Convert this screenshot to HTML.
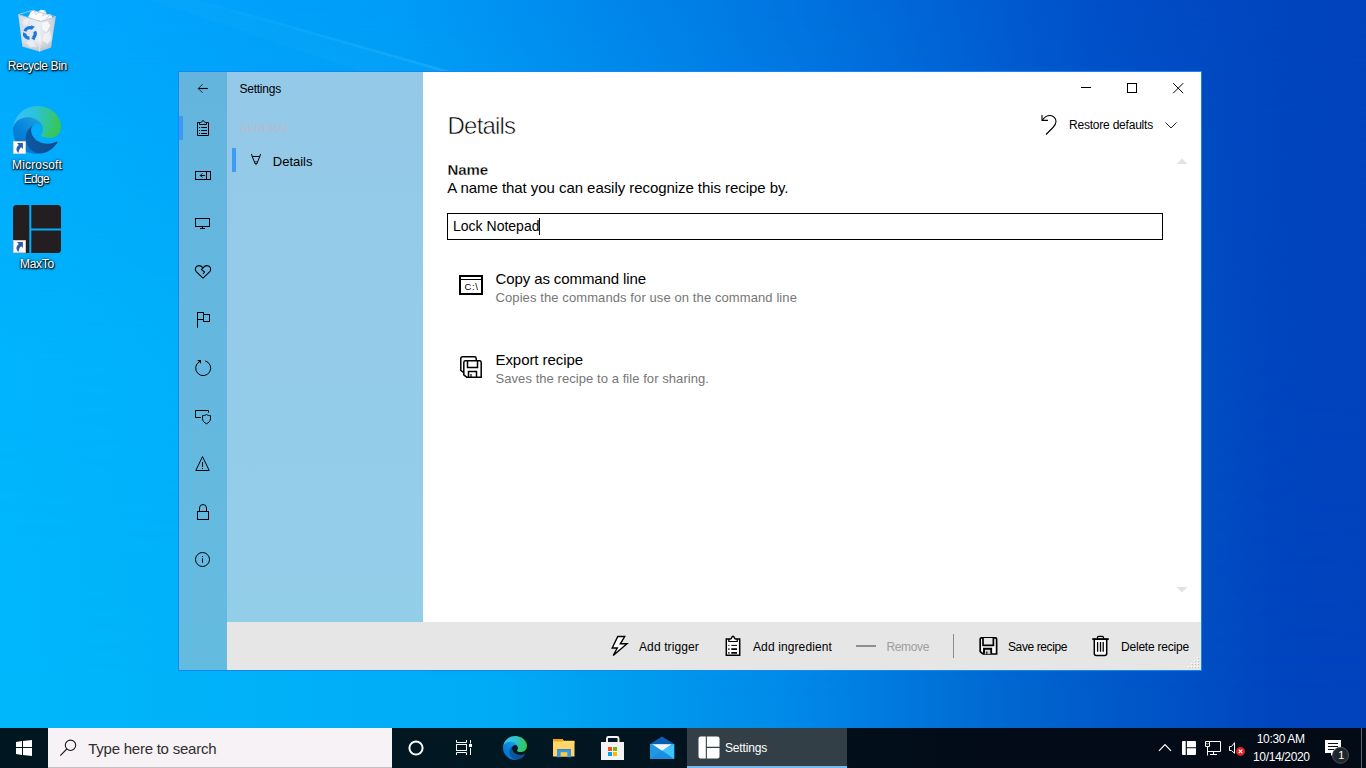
<!DOCTYPE html>
<html>
<head>
<meta charset="utf-8">
<title>Settings</title>
<style>
*{box-sizing:border-box;margin:0;padding:0}
html,body{width:1366px;height:768px;overflow:hidden}
body{font-family:"Liberation Sans",sans-serif;position:relative;color:#000;
background:linear-gradient(90deg,rgb(0,168,254) 0px,rgb(0,166,253) 100px,rgb(0,156,247) 400px,rgb(0,126,230) 700px,rgb(0,104,216) 900px,rgb(0,79,200) 1100px,rgb(0,68,188) 1310px,rgb(0,67,187) 1366px);}
.abs{position:absolute}
.t{position:absolute;white-space:nowrap;line-height:1}
svg{position:absolute;overflow:visible}
#bgl{position:absolute;left:0;top:0;width:1366px;height:728px;
background:linear-gradient(90deg,rgb(0,183,252) 0px,rgb(0,181,250) 100px,rgb(0,171,245) 500px,rgb(0,136,232) 800px,rgb(0,101,207) 1020px,rgb(0,68,190) 1280px,rgb(0,66,188) 1366px);
-webkit-mask-image:linear-gradient(180deg,transparent 0,rgba(0,0,0,.8) 50%,#000 96%);mask-image:linear-gradient(180deg,transparent 0,rgba(0,0,0,.8) 50%,#000 96%)}
#win{position:absolute;left:178px;top:71px;width:1024px;height:600px;background:#fff;border:1px solid #1587f4}
#rail{position:absolute;left:0;top:0;width:48px;height:598px;background:linear-gradient(180deg,#64b5de,#64bbe0)}
#side{position:absolute;left:48px;top:0;width:196px;height:550px;background:linear-gradient(180deg,#94c9e8,#93cee9)}
#bar{position:absolute;left:48px;top:550px;width:974px;height:48px;background:#e6e6e6}
#tb{position:absolute;left:0;top:728px;width:1366px;height:40px;background:linear-gradient(90deg,#001722 0,#011822 520px,#020b17 1000px,#030b17 1366px)}
#search{position:absolute;left:48px;top:0;width:344px;height:40px;background:#f6f2f6;border-bottom:1px solid #c2bfc2}
#task{position:absolute;left:687px;top:0;width:160px;height:40px;background:#323f47}
#task i{position:absolute;left:0;bottom:0;width:160px;height:2px;background:#76b9ed}
</style>
</head>
<body>
<div id="bgl"></div>
<svg id="ray" style="left:0;top:0" width="1366" height="80" viewBox="0 0 1366 80"><defs><linearGradient id="rg" x1="0" y1="0" x2="1" y2="0"><stop offset="0" stop-color="#3cc0ff" stop-opacity=".05"/><stop offset="1" stop-color="#3cc0ff" stop-opacity=".38"/></linearGradient></defs><path d="M196 0L470 78" stroke="url(#rg)" stroke-width="2.500" fill="none"/><path d="M196 0L470 78L380 78L150 0z" fill="#22b4ff" opacity=".12"/></svg>

<!-- DESKTOP ICONS -->
<svg style="left:14px;top:8px" width="46" height="46" viewBox="0 0 46 46">
<defs><linearGradient id="rb1" x1="0" y1="0" x2="1" y2="0"><stop offset="0" stop-color="#cfd8e4"/><stop offset=".5" stop-color="#e4e8ee"/><stop offset="1" stop-color="#eef0f3"/></linearGradient>
<linearGradient id="rb2" x1="0" y1="0" x2="1" y2="0"><stop offset="0" stop-color="#e9ebee"/><stop offset="1" stop-color="#c6ccd6"/></linearGradient>
<linearGradient id="rb3" x1="0" y1="0" x2="0" y2="1"><stop offset="0" stop-color="#fff" stop-opacity="0"/><stop offset=".7" stop-color="#9aa0aa" stop-opacity="0"/><stop offset="1" stop-color="#8f96a2" stop-opacity=".5"/></linearGradient></defs>
<path d="M14 9L17 3.500L20 2.200L23.500 4L27 1.800L31 2.500L32.500 6L37 6.500L38.500 10L30 13.500L20 12z" fill="#fbfbfc"/>
<path d="M20 2.200L22 7L27 1.800M31 2.500L28.500 8L32.500 6M37 6.500L32 10.500" fill="none" stroke="#cfd4db" stroke-width=".9"/>
<path d="M4.200 6.600L26.600 13.400L25.600 43.600L8.400 38.400z" fill="url(#rb1)"/>
<path d="M26.600 13.400L41.700 8.700L37 39.400L25.600 43.600z" fill="url(#rb2)"/>
<path d="M4.200 6.600L26.600 13.400L25.600 43.600L8.400 38.400zM26.600 13.400L41.700 8.700L37 39.400L25.600 43.600z" fill="url(#rb3)"/>
<path d="M28 15L33.500 13.300L36.500 18L33 24.500L28.500 22z" fill="#fafbfc" opacity=".85"/>
<path d="M30 26L36 23L37.500 31L33.500 36.500L28.500 33z" fill="#f6f7f9" opacity=".7"/>
<path d="M33 24.500L36.500 18M28.500 33L33.500 36.500" stroke="#b9bfc9" stroke-width=".7" opacity=".7"/>
<path d="M9.500 12L15 10.500L13 17L8.500 16.500z" fill="#f5f7fa" opacity=".6"/>
<path d="M12 34L18 33L22.500 38.500L16 39.500z" fill="#f7f8fa" opacity=".6"/>
<path d="M4.200 6.600L18.300 2.400L41.700 8.700L26.600 13.400z" fill="none" stroke="#b6c7da" stroke-width=".9"/>
<path d="M26.600 13.400L25.600 43.600" stroke="#fff" stroke-width=".8" opacity=".8"/>
<g fill="none" stroke="#1b78dc" stroke-width="3.200"><path d="M10.900 23.200a5.200 5.200 0 0 1 7.300-3"/><path d="M20.700 23.300a5.200 5.200 0 0 1-1.700 6.400"/><path d="M15.500 30.200a5.200 5.200 0 0 1-4.900-3.700"/></g>
<g fill="#1b78dc"><path d="M17 17.200l3.800 1.500l-3 3z"/><path d="M21.500 28.500l-1 4l-3.500-2.600z"/><path d="M9 28.500l0-4.200l3.800 1.800z"/></g>
</svg>
<span class="t" style="left:7.80px;top:59.64px;font-size:12px;letter-spacing:-0.406px;color:#fff;text-shadow:0 1px 2px rgba(0,0,0,.95),0 0 3px rgba(0,0,0,.7),1px 1px 1px rgba(0,0,0,.8);">Recycle Bin</span>
<svg style="left:13px;top:106px" width="48" height="48" viewBox="0 0 256 256"><defs><linearGradient id="e1a" x1="63" y1="178" x2="242" y2="178" gradientUnits="userSpaceOnUse"><stop offset="0" stop-color="#0c59a4"/><stop offset="1" stop-color="#114a8b"/></linearGradient>
<linearGradient id="e1c" x1="157" y1="99" x2="46" y2="220" gradientUnits="userSpaceOnUse"><stop offset="0" stop-color="#1b9de2"/><stop offset=".16" stop-color="#1595df"/><stop offset=".67" stop-color="#0680d7"/><stop offset="1" stop-color="#0078d4"/></linearGradient>
<radialGradient id="e1e" cx="25" cy="47" r="340" gradientUnits="userSpaceOnUse"><stop offset="0" stop-color="#35c1f1"/><stop offset=".11" stop-color="#34c1ed"/><stop offset=".23" stop-color="#2fc2df"/><stop offset=".31" stop-color="#2bc3d2"/><stop offset=".67" stop-color="#36c752"/></radialGradient></defs>
<path d="M231 190.500c-3.400 1.800-6.900 3.400-10.500 4.700a101.500 101.500 0 0 1-35.800 6.400c-47.200 0-88.300-32.400-88.300-74.100a31.400 31.400 0 0 1 16.400-27.200c-42.700 1.800-53.700 46.300-53.700 72.300 0 73.700 67.900 81.200 82.600 81.200 7.900 0 19.800-2.300 27-4.600l1.300-.4a128.300 128.300 0 0 0 66.600-52.800 4 4 0 0 0-5.500-5.500z" fill="url(#e1a)"/>
<path d="M105.700 241.400a79.200 79.200 0 0 1-22.700-21.300 80.700 80.700 0 0 1 29.500-120c3.200-1.500 8.500-4.100 15.600-4a32.400 32.400 0 0 1 25.700 13 31.900 31.900 0 0 1 6.300 18.700c0-.2 24.500-79.600-80-79.600-43.900 0-80 41.600-80 78.200a130.200 130.200 0 0 0 12.100 56 128 128 0 0 0 156.400 67.100 75.500 75.500 0 0 1-62.800-8z" fill="url(#e1c)"/>
<path d="M152.300 148.900c-.9 1-3.400 2.500-3.400 5.600 0 2.600 1.700 5.200 4.800 7.300 14.300 10 41.400 8.600 41.500 8.600a59.600 59.600 0 0 0 30.300-8.300 61.400 61.400 0 0 0 30.400-52.900c.3-22.400-8-37.300-11.300-43.900C223.500 24.100 178.100 0 128 0A128 128 0 0 0 0 126.200c.5-36.500 36.800-66 80-66 3.500 0 23.500.3 42 10a72.600 72.600 0 0 1 30.900 29.300c6.100 10.600 7.200 24.100 7.200 29.500s-2.700 13.300-7.900 20z" fill="url(#e1e)"/></svg>
<svg style="left:13px;top:141px" width="13" height="13" viewBox="0 0 13 13"><rect x=".4" y=".4" width="12.200" height="12.200" fill="#fcfcfd" stroke="#e6cdbb" stroke-width=".8"/><path d="M4 2.100H9.900V8L8.100 6.200C6.600 7.300 5.900 9.200 5.600 11.800C3.300 10.200 2.200 6.600 5.800 3.900z" fill="#2a5cab"/></svg>
<span class="t" style="left:12.10px;top:158.94px;font-size:12px;letter-spacing:0.146px;color:#fff;text-shadow:0 1px 2px rgba(0,0,0,.95),0 0 3px rgba(0,0,0,.7),1px 1px 1px rgba(0,0,0,.8);">Microsoft</span>
<span class="t" style="left:23.70px;top:173.44px;font-size:12px;letter-spacing:-0.683px;color:#fff;text-shadow:0 1px 2px rgba(0,0,0,.95),0 0 3px rgba(0,0,0,.7),1px 1px 1px rgba(0,0,0,.8);">Edge</span>
<svg style="left:13px;top:205px" width="48" height="48" viewBox="0 0 48 48"><g fill="#231f20"><path d="M3.500 0H16.300V48H3.500A3.500 3.500 0 0 1 0 44.500V3.500A3.500 3.500 0 0 1 3.500 0z"/><path d="M18.300 0H44.500A3.500 3.500 0 0 1 48 3.500V23.600H18.300z"/><path d="M18.300 25.500H48V44.500A3.500 3.500 0 0 1 44.500 48H18.300z"/></g></svg>
<svg style="left:13px;top:240px" width="13" height="13" viewBox="0 0 13 13"><rect x=".4" y=".4" width="12.200" height="12.200" fill="#fcfcfd" stroke="#e6cdbb" stroke-width=".8"/><path d="M4 2.100H9.900V8L8.100 6.200C6.600 7.300 5.900 9.200 5.600 11.800C3.300 10.200 2.200 6.600 5.800 3.900z" fill="#2a5cab"/></svg>
<span class="t" style="left:20.00px;top:257.84px;font-size:12px;letter-spacing:-0.310px;color:#fff;text-shadow:0 1px 2px rgba(0,0,0,.95),0 0 3px rgba(0,0,0,.7),1px 1px 1px rgba(0,0,0,.8);">MaxTo</span>

<!-- WINDOW -->
<div id="win">
  <div id="rail"></div>
  <div id="side"></div>
  <div id="bar"></div>
</div>
<div class="abs" style="left:179px;top:116px;width:4px;height:24px;background:#3b9af5"></div>
<svg style="left:195px;top:80px" width="16" height="16" viewBox="0 0 16 16"><path d="M3.2 8.5H12.8" stroke="#000" stroke-width="1.1" fill="none"/><path d="M7.6 4.2L3.3 8.5L7.6 12.8" stroke="#0b1a24" stroke-width="0.9" fill="none"/></svg>
<svg style="left:195px;top:120px" width="16" height="17" viewBox="0 0 16 17"><g fill="none" stroke="#000" stroke-width="1"><path d="M2.500 2.500H5.700C6.900 2.500 6.600 .6 8 .6S9.100 2.500 10.300 2.500H13.500V15.500H2.500z"/><path d="M4.500 2.500v2h7v-2"/><path d="M6.200 7.500h5.800M6.200 10.500h5.800M6.200 13.500h5.800"/><path d="M4 7.500h.9M4 10.500h.9M4 13.500h.9"/></g></svg>
<svg style="left:195px;top:171px" width="16" height="9" viewBox="0 0 16 9"><g fill="none" stroke="#000" stroke-width="1"><rect x=".5" y=".5" width="15" height="8"/><path d="M11.500 .5v8"/><path d="M5.300 4.500h4.500M7.300 2.500l-2 2l2 2"/></g></svg>
<svg style="left:195px;top:218px" width="15" height="11" viewBox="0 0 15 11"><g fill="none" stroke="#000" stroke-width="1"><rect x=".5" y=".5" width="14" height="8"/><path d="M7.500 8.500v2M5 10.500h5"/></g></svg>
<svg style="left:195px;top:265px" width="16" height="14" viewBox="0 0 16 14"><g fill="none" stroke="#000" stroke-width="1.1" stroke-linejoin="round"><path d="M8 13.200L1.200 6.600C-.5 4.700.3 .6 4 .6c2 0 3 1 4 2.200c1-1.200 2-2.200 4-2.200c3.700 0 4.500 4.100 2.800 6z"/><path d="M8 2.800L6.400 4.600L9.600 7L8 9"/></g></svg>
<svg style="left:197px;top:312px" width="13" height="16" viewBox="0 0 13 16"><g fill="none" stroke="#000" stroke-width="1"><path d="M.5 .5v15.300"/><rect x=".5" y=".5" width="6" height="7"/><rect x="6.500" y="2.500" width="6" height="7"/></g></svg>
<svg style="left:195px;top:360px" width="16" height="17" viewBox="0 0 16 17"><path d="M10.200 .9A7.500 7.500 0 1 1 4.300 1.700" fill="none" stroke="#000" stroke-width="1"/><path d="M2.300 0H6V3.800z" fill="#000"/></svg>
<svg style="left:195px;top:410px" width="17" height="15" viewBox="0 0 17 15"><g fill="none" stroke="#000" stroke-width="1"><path d="M13.500 2.700V.5H.5V7.500H5.800"/><path d="M11.500 4.500c-1.300 1-2.500 1.100-4 1.100v3.200c0 2.200 2 4 4 5c2-1 4-2.800 4-5V5.600c-1.500 0-2.700-.1-4-1.100z"/></g></svg>
<svg style="left:195px;top:455px" width="15" height="17" viewBox="0 0 15 17"><g fill="none" stroke="#000" stroke-width="1"><path d="M7.500 1.600L.8 15.500H14.200z"/><path d="M7.500 7v5M7.500 13v1"/></g></svg>
<svg style="left:197px;top:504px" width="12" height="16" viewBox="0 0 12 16"><g fill="none" stroke="#000" stroke-width="1"><rect x=".5" y="7.500" width="11" height="8"/><path d="M2.500 7.500V4a3.500 3.500 0 0 1 7 0V7.500"/></g></svg>
<svg style="left:195px;top:552px" width="16" height="16" viewBox="0 0 16 16"><g fill="none" stroke="#000" stroke-width="1"><circle cx="7.500" cy="7.500" r="7"/><path d="M7.500 6.400v4.400M7.500 4v1"/></g></svg>
<span class="t" style="left:239.40px;top:82.84px;font-size:12px;letter-spacing:-0.221px;color:#000;">Settings</span>
<span class="t" style="left:239.40px;top:122.69px;font-size:11px;letter-spacing:-0.210px;color:#b6bccb;">GENERAL</span>
<div class="abs" style="left:232px;top:148px;width:4px;height:24px;background:#3d9bfc"></div>
<svg style="left:251px;top:154px" width="10" height="12" viewBox="0 0 10 12"><g fill="none" stroke="#000" stroke-width="1"><path d="M.5 0L1.200 2.500L4.300 10M9.500 0L8.800 2.500L5.700 10"/><path d="M1.200 2.500H8.800"/><path d="M3.600 8.200c.9-.7 1.900-.7 2.800 0" stroke-width=".8"/></g><path d="M4 9.300h2L5 11.400z" fill="#000"/></svg>
<span class="t" style="left:272.80px;top:154.50px;font-size:13px;letter-spacing:-0.005px;color:#000;">Details</span>
<svg style="left:1081px;top:83px" width="103" height="11" viewBox="0 0 103 11"><g fill="none" stroke="#000" stroke-width="1"><path d="M0 4.500h10"/><rect x="46.500" y=".5" width="9" height="9"/><path d="M92.200 .2l10 10M102.200 .2l-10 10"/></g></svg>
<svg style="left:1040px;top:114px" width="18" height="22" viewBox="0 0 18 22"><g fill="none" stroke="#000" stroke-width="1.100"><path d="M2 1V6.400H8"/><path d="M2.300 6.200C4.500 3 7 1.500 10 1.500c3.500 0 6 3 6 6c0 2.500-1 4-3 6L6 20.500"/></g></svg>
<span class="t" style="left:1069.00px;top:118.84px;font-size:12px;letter-spacing:-0.213px;color:#000;">Restore defaults</span>
<svg style="left:1165px;top:122px" width="12" height="7" viewBox="0 0 12 7"><path d="M.5 .5L6 6L11.500 .5" fill="none" stroke="#222" stroke-width="1"/></svg>
<svg style="left:1176px;top:158px" width="12" height="6" viewBox="0 0 12 6"><path d="M.5 6H11.500L6 .5z" fill="#e3e3e3"/></svg>
<svg style="left:1176px;top:587px" width="12" height="6" viewBox="0 0 12 6"><path d="M.5 0H11.500L6 5.500z" fill="#e3e3e3"/></svg>
<span class="t" style="left:447.60px;top:114.38px;font-size:24px;letter-spacing:-0.808px;color:#000;-webkit-text-stroke:.55px #fff;">Details</span>
<span class="t" style="left:447.50px;top:162.30px;font-size:15px;letter-spacing:-0.089px;color:#000;font-weight:bold;-webkit-text-stroke:.3px #fff;">Name</span>
<span class="t" style="left:447.30px;top:179.90px;font-size:15px;letter-spacing:-0.056px;color:#000;">A name that you can easily recognize this recipe by.</span>
<div class="abs" style="left:447px;top:213px;width:716px;height:27px;border:1px solid #000;background:#fff"></div>
<span class="t" style="left:453.00px;top:219.45px;font-size:14px;letter-spacing:0.009px;color:#000;">Lock Notepad</span>
<div class="abs" style="left:539px;top:218px;width:1px;height:17px;background:#000"></div>
<svg style="left:459px;top:275px" width="24" height="20" viewBox="0 0 24 20"><rect x="1" y="1" width="22" height="18" fill="none" stroke="#000" stroke-width="2"/><path d="M1 4.500h22" stroke="#000" stroke-width="1"/></svg>
<span class="t" style="left:464.50px;top:281.96px;font-size:9.5px;letter-spacing:0.620px;color:#000;">C:\</span>
<span class="t" style="left:495.50px;top:271.10px;font-size:15px;letter-spacing:-0.104px;color:#000;">Copy as command line</span>
<span class="t" style="left:495.50px;top:290.80px;font-size:13px;letter-spacing:0.096px;color:#767676;">Copies the commands for use on the command line</span>
<svg style="left:460px;top:356px" width="22" height="22" viewBox="0 0 22 22"><g fill="none" stroke="#000" stroke-width="1.500"><path d="M3.500 16.500L.8 14.300V2.500c0-1 .7-1.700 1.700-1.700H14.500c1 0 1.700.7 1.700 1.700V4"/><path d="M5.500 4.800H19.500c1 0 1.700.7 1.700 1.700V21.200H6.700L3.800 18.800V6.500c0-1 .7-1.700 1.700-1.700z" fill="#fff"/><path d="M7.500 4.800V11.500H17.500V4.800"/><path d="M8.500 21V15.500H16.500V21"/><path d="M11 18v3" stroke-width="1.200"/></g></svg>
<span class="t" style="left:495.50px;top:352.10px;font-size:15px;letter-spacing:-0.068px;color:#000;">Export recipe</span>
<span class="t" style="left:495.50px;top:371.80px;font-size:13px;letter-spacing:0.064px;color:#767676;">Saves the recipe to a file for sharing.</span>
<svg style="left:611px;top:635px" width="18" height="22" viewBox="0 0 18 22"><path d="M6.800 1.500H13.700L9.300 8.800H16L2.200 20.500L6.300 13H1.200z" fill="#fff" stroke="#000" stroke-width="1.400" stroke-linejoin="miter"/></svg>
<span class="t" style="left:639.00px;top:640.64px;font-size:12px;letter-spacing:0.117px;color:#000;">Add trigger</span>
<svg style="left:725px;top:635px" width="16" height="22" viewBox="0 0 16 22"><g stroke="#000"><path d="M1.300 3.900H5.500C7 3.900 6.500 1.200 8 1.200S9 3.900 10.500 3.900H14.700V20.200H1.300z" fill="#fff" stroke-width="1.500"/><path d="M3.800 3.900v2.600h8.400V3.900" fill="none" stroke-width="1.200"/><path d="M6.300 10.400h5.700" stroke-width="1"/><path d="M6.300 14.100h5.700M6.300 17.900h5.700" stroke-width="1.800"/><path d="M3.300 10.400h1.200" stroke-width="1"/><path d="M3.300 14.100h1.200M3.300 17.900h1.200" stroke-width="1.800"/></g></svg>
<span class="t" style="left:753.00px;top:640.64px;font-size:12px;letter-spacing:0.113px;color:#000;">Add ingredient</span>
<div class="abs" style="left:856px;top:645px;width:20px;height:2px;background:#8e8e8e"></div>
<span class="t" style="left:886.50px;top:640.64px;font-size:12px;letter-spacing:-0.365px;color:#9e9e9e;">Remove</span>
<div class="abs" style="left:953px;top:634px;width:1px;height:24px;background:#8a8a8a"></div>
<svg style="left:979px;top:636px" width="19" height="20" viewBox="0 0 19 20"><g stroke="#000" stroke-width="1.700" fill="#fff"><path d="M1.200 3c0-.8.500-1.200 1.300-1.200H16.300c.8 0 1.300.4 1.300 1.200V18H4L1.200 15.700z"/><path d="M4 2V9.300H14.400V2" fill="#e6e6e6"/><path d="M5 17.800V12.700H12.200V17.800" stroke-width="1.900" fill="#d8d8d8"/><path d="M7.800 15.400v2.400" stroke-width="1.200"/></g></svg>
<span class="t" style="left:1008.00px;top:640.64px;font-size:12px;letter-spacing:-0.398px;color:#000;">Save recipe</span>
<svg style="left:1092px;top:635px" width="17" height="22" viewBox="0 0 17 22"><g stroke="#000" fill="none"><path d="M2.300 4.300V18.500c0 1.200.8 2 2 2H12.700c1.200 0 2-.8 2-2V4.300" fill="#fff" stroke-width="1.500"/><path d="M.3 4.100H16.700" stroke-width="1.900"/><path d="M5.500 3.500V2.500c0-.7.500-1.200 1.200-1.200h3.600c.7 0 1.200.5 1.200 1.200v1" stroke-width="1.300"/><path d="M5.600 7v9.700M8.500 7v9.700M11.200 7v9.700" stroke-width="1.300"/></g></svg>
<span class="t" style="left:1121.00px;top:640.64px;font-size:12px;letter-spacing:-0.210px;color:#000;">Delete recipe</span>
<svg style="left:0;top:0" width="1366" height="768"><g fill="#bdbdbd"><rect x="1198" y="658" width="1" height="1"/><rect x="1198" y="661" width="1" height="1"/><rect x="1198" y="664" width="1" height="1"/><rect x="1198" y="667" width="1" height="1"/><rect x="1195" y="661" width="1" height="1"/><rect x="1195" y="664" width="1" height="1"/><rect x="1195" y="667" width="1" height="1"/><rect x="1192" y="664" width="1" height="1"/><rect x="1192" y="667" width="1" height="1"/><rect x="1189" y="667" width="1" height="1"/></g><g fill="#fff"><rect x="1197" y="657" width="1.300" height="1.300"/><rect x="1197" y="660" width="1.300" height="1.300"/><rect x="1197" y="663" width="1.300" height="1.300"/><rect x="1197" y="666" width="1.300" height="1.300"/><rect x="1194" y="660" width="1.300" height="1.300"/><rect x="1194" y="663" width="1.300" height="1.300"/><rect x="1194" y="666" width="1.300" height="1.300"/><rect x="1191" y="663" width="1.300" height="1.300"/><rect x="1191" y="666" width="1.300" height="1.300"/><rect x="1188" y="666" width="1.300" height="1.300"/></g></svg>

<!-- TASKBAR -->
<div id="tb">
  <div id="search"></div>
  <div id="task"><i></i></div>
</div>
<svg style="left:16px;top:740px" width="16" height="16" viewBox="0 0 16 16"><g fill="#fff"><path d="M0 1.900L6 1V7H0z"/><path d="M7 .9L16 0V7H7z"/><path d="M0 8H6V15L0 14.100z"/><path d="M7 8H16V16L7 15.100z"/></g></svg>
<svg style="left:59px;top:739px" width="18" height="18" viewBox="0 0 18 18"><g fill="none" stroke="#1b1b1b" stroke-width="1.100"><circle cx="11.500" cy="6.300" r="5.200"/><path d="M7.800 10L1.300 16.700"/></g></svg>
<span class="t" style="left:88.20px;top:741.30px;font-size:15px;letter-spacing:-0.237px;color:#2f2f2f;">Type here to search</span>
<svg style="left:407px;top:739px" width="18" height="18" viewBox="0 0 18 18"><circle cx="9" cy="9" r="6.600" fill="none" stroke="#fff" stroke-width="2"/></svg>
<svg style="left:455px;top:739px" width="18" height="17" viewBox="0 0 18 17"><g fill="none" stroke="#fff" stroke-width="1"><rect x="1.500" y="5.500" width="10" height="6"/><path d="M1.500 1V3.500H11.500V1M1.500 16V13.500H11.500V16"/><path d="M15.500 1V4.500M15.500 9V16"/></g><rect x="14" y="5" width="3" height="3" fill="#fff"/></svg>
<svg style="left:503px;top:736px" width="24" height="24" viewBox="0 0 256 256"><defs><linearGradient id="e2a" x1="63" y1="178" x2="242" y2="178" gradientUnits="userSpaceOnUse"><stop offset="0" stop-color="#0c59a4"/><stop offset="1" stop-color="#114a8b"/></linearGradient>
<linearGradient id="e2c" x1="157" y1="99" x2="46" y2="220" gradientUnits="userSpaceOnUse"><stop offset="0" stop-color="#1b9de2"/><stop offset=".16" stop-color="#1595df"/><stop offset=".67" stop-color="#0680d7"/><stop offset="1" stop-color="#0078d4"/></linearGradient>
<radialGradient id="e2e" cx="25" cy="47" r="340" gradientUnits="userSpaceOnUse"><stop offset="0" stop-color="#35c1f1"/><stop offset=".11" stop-color="#34c1ed"/><stop offset=".23" stop-color="#2fc2df"/><stop offset=".31" stop-color="#2bc3d2"/><stop offset=".67" stop-color="#36c752"/></radialGradient></defs>
<path d="M231 190.500c-3.400 1.800-6.900 3.400-10.500 4.700a101.500 101.500 0 0 1-35.800 6.400c-47.200 0-88.300-32.400-88.300-74.100a31.400 31.400 0 0 1 16.400-27.200c-42.700 1.800-53.700 46.300-53.700 72.300 0 73.700 67.900 81.200 82.600 81.200 7.900 0 19.800-2.300 27-4.600l1.300-.4a128.300 128.300 0 0 0 66.600-52.800 4 4 0 0 0-5.500-5.500z" fill="url(#e2a)"/>
<path d="M105.700 241.400a79.200 79.200 0 0 1-22.700-21.300 80.700 80.700 0 0 1 29.500-120c3.200-1.500 8.500-4.100 15.600-4a32.400 32.400 0 0 1 25.700 13 31.900 31.900 0 0 1 6.300 18.700c0-.2 24.500-79.600-80-79.600-43.900 0-80 41.600-80 78.200a130.200 130.200 0 0 0 12.100 56 128 128 0 0 0 156.400 67.100 75.500 75.500 0 0 1-62.800-8z" fill="url(#e2c)"/>
<path d="M152.300 148.900c-.9 1-3.400 2.500-3.400 5.600 0 2.600 1.700 5.200 4.800 7.300 14.300 10 41.400 8.600 41.500 8.600a59.600 59.600 0 0 0 30.300-8.300 61.400 61.400 0 0 0 30.400-52.900c.3-22.400-8-37.300-11.300-43.900C223.500 24.100 178.100 0 128 0A128 128 0 0 0 0 126.200c.5-36.500 36.800-66 80-66 3.500 0 23.500.3 42 10a72.600 72.600 0 0 1 30.900 29.300c6.100 10.600 7.200 24.100 7.200 29.500s-2.700 13.300-7.900 20z" fill="url(#e2e)"/></svg>
<svg style="left:553px;top:738px" width="22" height="20" viewBox="0 0 22 20"><path d="M0 1H9.500L10.800 2.800H21.500V18.500H0z" fill="#ffd566"/><path d="M.3 1H9.300L10.300 2.300L9.300 3.500H.3z" fill="#efa307"/><path d="M0 3.800H21.500V5H0z" fill="#ffe08a" opacity=".6"/><path d="M4 11H18V19.300H14.200V14.500H7.800V19.300H4z" fill="#3f94e0"/><path d="M4 11H18V12.200H4z" fill="#2f86d6"/><path d="M7.800 14.500H14.200V18.500H7.800z" fill="#fcc940"/></svg>
<svg style="left:600px;top:735px" width="25" height="26" viewBox="0 0 25 26"><path d="M7 8V3.500c0-1 .7-1.500 1.500-1.500H17c.8 0 1.500.5 1.500 1.500V8" fill="none" stroke="#f4f4f4" stroke-width="1.900"/><rect x="1" y="7" width="23" height="18" fill="#f3f3f4"/><rect x="8" y="12" width="4" height="4" fill="#f25022"/><rect x="13" y="12" width="4" height="4" fill="#7fba00"/><rect x="8" y="17" width="4" height="4" fill="#00a4ef"/><rect x="13" y="17" width="4" height="4" fill="#ffb900"/></svg>
<svg style="left:650px;top:736px" width="25" height="24" viewBox="0 0 25 24"><path d="M0 8L12 .5L24.200 8V9H0z" fill="#0a5fb4"/><path d="M0 8H24.200V23H0z" fill="#29a9eb"/><path d="M0 23L12 14L24.200 23z" fill="#1a8fe0"/><path d="M0 8V23L12.100 14.500z" fill="#2196e3"/><path d="M24.200 8V23L12.100 14.500z" fill="#3cc4fb"/><path d="M2.500 8.300H21.700L12.100 14.800z" fill="#f6f6f8"/></svg>
<svg style="left:698px;top:736px" width="22" height="23" viewBox="0 0 22 23"><g fill="#fff"><path d="M2.500 .5H7.800V22.500H2.500A2 2 0 0 1 .5 20.500V2.500A2 2 0 0 1 2.500 .5z"/><path d="M8.900 .5H19.500A2 2 0 0 1 21.500 2.500V10.800H8.900z"/><path d="M8.900 11.900H21.500V20.500A2 2 0 0 1 19.500 22.500H8.900z"/></g></svg>
<span class="t" style="left:725.00px;top:741.54px;font-size:12px;letter-spacing:-0.171px;color:#fff;">Settings</span>
<svg style="left:1158px;top:743px" width="14" height="9" viewBox="0 0 14 9"><path d="M1 7.800L7 1.600L13 7.800" fill="none" stroke="#fff" stroke-width="1.200"/></svg>
<svg style="left:1182px;top:741px" width="14" height="14" viewBox="0 0 14 14"><g fill="#fff"><path d="M1 0H3.700V14H1A1 1 0 0 1 0 13V1A1 1 0 0 1 1 0z"/><path d="M4.900 0H13A1 1 0 0 1 14 1V6.200H4.900z"/><path d="M4.900 7.300H14V13A1 1 0 0 1 13 14H4.900z"/></g></svg>
<svg style="left:1204px;top:741px" width="18" height="15" viewBox="0 0 18 15"><g fill="none" stroke="#fff" stroke-width="1"><path d="M1.500 .5H16.500V10.500H3.500"/><path d="M1.500 .5V5.500H5.500V.5"/><path d="M3.500 5.500V14.500"/><path d="M9.500 10.500V13.500M6 13.500H13"/><path d="M2.500 2.200l1 1.100l1-1.100" stroke-width=".8"/></g></svg>
<svg style="left:1228px;top:741px" width="18" height="16" viewBox="0 0 18 16"><path d="M1.500 5.500H3.500L6.500 1.700V12.300L3.500 9.500H1.500z" fill="none" stroke="#fff" stroke-width="1"/><circle cx="12.500" cy="10.400" r="4.500" fill="#de2229"/><path d="M10.700 8.600l3.600 3.600M14.300 8.600l-3.600 3.600" stroke="#fff" stroke-width="1.100"/></svg>
<span class="t" style="left:1256.80px;top:732.94px;font-size:12px;letter-spacing:-0.364px;color:#fff;">10:30 AM</span>
<span class="t" style="left:1253.00px;top:750.84px;font-size:12px;letter-spacing:-0.338px;color:#fff;">10/14/2020</span>
<svg style="left:1325px;top:739px" width="26" height="26" viewBox="0 0 26 26"><path d="M0 1H16V14H9L6 17V14H0z" fill="#fff"/><path d="M3 4.500H13M3 7.500H13M3 10.500H9" stroke="#07101c" stroke-width="1"/><circle cx="15.500" cy="16.200" r="8" fill="#22262b" stroke="#56646f" stroke-width=".8"/></svg>
<span class="t" style="left:1338.20px;top:750.29px;font-size:11px;letter-spacing:0.000px;color:#fff;">1</span>
<div class="abs" style="left:1361px;top:728px;width:1px;height:40px;background:#5e656d"></div>
</body>
</html>
